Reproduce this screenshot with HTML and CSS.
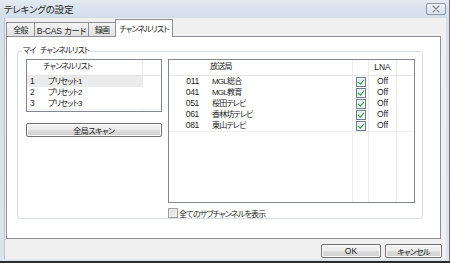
FILE: index.html
```html
<!DOCTYPE html>
<html lang="ja">
<head>
<meta charset="utf-8">
<title>テレキングの設定</title>
<link rel="stylesheet" href="styles.css">
</head>
<body>
<div class="window">
  <div class="titlebar">
    <span class="title">テレキングの設定</span>
    <span class="close">
      <svg width="18" height="10" viewBox="0 0 18 10"><path d="M6 2 L12 8 M12 2 L6 8" stroke="#fff" stroke-width="3" stroke-linecap="round"/><path d="M6 2 L12 8 M12 2 L6 8" stroke="#6f7b8a" stroke-width="1.3" stroke-linecap="round"/></svg>
    </span>
  </div>
  <div class="client">
    <div class="tabs">
      <div class="tab t1">全般</div>
      <div class="tab t2">B-CAS カード</div>
      <div class="tab t3">録画</div>
      <div class="tab active">チャンネルリスト</div>
    </div>
    <div class="panel">
      <fieldset class="group">
        <legend>マイ チャンネルリスト</legend>
        <div class="group-body">
          <div class="left">
            <div class="list llist">
              <div class="lrow head"><span></span><span class="hname">チャンネルリスト</span><span></span></div>
              <div class="lrow sel"><span class="idx">1</span><span class="nm">プリセット1</span><span></span></div>
              <div class="lrow"><span class="idx">2</span><span class="nm">プリセット2</span><span></span></div>
              <div class="lrow"><span class="idx">3</span><span class="nm">プリセット3</span><span></span></div>
              <div class="lrow fill"><span></span><span></span><span></span></div>
            </div>
            <div class="btn scan">全局スキャン</div>
          </div>
          <div class="right">
            <div class="list rlist">
              <div class="rrow head"><span></span><span class="hname">放送局</span><span></span><span class="lna">LNA</span><span></span></div>
              <div class="rrow"><span class="num">011</span><span class="nm">MGL総合</span><span class="chk"><i class="cb on"></i></span><span class="lna">Off</span><span></span></div>
              <div class="rrow"><span class="num">041</span><span class="nm">MGL教育</span><span class="chk"><i class="cb on"></i></span><span class="lna">Off</span><span></span></div>
              <div class="rrow"><span class="num">051</span><span class="nm">桜田テレビ</span><span class="chk"><i class="cb on"></i></span><span class="lna">Off</span><span></span></div>
              <div class="rrow"><span class="num">061</span><span class="nm">香林坊テレビ</span><span class="chk"><i class="cb on"></i></span><span class="lna">Off</span><span></span></div>
              <div class="rrow"><span class="num">081</span><span class="nm">東山テレビ</span><span class="chk"><i class="cb on"></i></span><span class="lna">Off</span><span></span></div>
              <div class="rrow fill"><span></span><span></span><span></span><span></span><span></span></div>
            </div>
            <label class="sub"><i class="cb off"></i><span>全てのサブチャンネルを表示</span></label>
          </div>
        </div>
      </fieldset>
    </div>
    <div class="actions">
      <div class="btn ok">OK</div>
      <div class="btn cancel">キャンセル</div>
    </div>
  </div>
</div>
</body>
</html>
```
FILE: styles.css
```css
* { box-sizing: border-box; }
html, body { margin: 0; padding: 0; }
body {
  width: 450px; height: 263px; overflow: hidden;
  font-family: "Liberation Sans", "Noto Sans CJK JP", sans-serif;
  font-size: 8px;
  font-feature-settings: "palt";
  letter-spacing: -0.8px;
  color: #222;
  background: #2b2b2b;
}
.window {
  width: 450px; height: 261px;
  display: flex; flex-direction: column;
  background: linear-gradient(to bottom, #dbe5ef 0, #d5e0eb 17px, #d9e4ef 100%);
  border-right: 1px solid #6c7580;
}
.titlebar {
  height: 18px; flex: none;
  display: flex; align-items: center; justify-content: space-between;
  padding: 0 3px 1px 4px;
  background: linear-gradient(to bottom, #e2eaf3, #d1dde9);
}
.title { font-size: 9.5px; color: #1e1e1e; letter-spacing: -0.2px; }
.close {
  width: 20px; height: 12px; margin-top: 1px;
  display: flex; align-items: center; justify-content: center;
  border: 1px solid #8a97a8; border-radius: 2px;
  background: linear-gradient(to bottom, #eef3f8, #d6dfea);
}
.client {
  flex: 1;
  margin: 0 3px 2px 4px;
  background: #f0f0f0;
  border-left: 1px solid #b5c2d0;
  padding: 1px 5px 0 1px;
  display: flex; flex-direction: column;
}
.tabs { display: flex; align-items: flex-end; height: 17px; position: relative; z-index: 1; }
.tab {
  height: 14px;
  border: 1px solid #8d9099; border-bottom: none; margin-right: -1px;
  background: linear-gradient(to bottom, #f4f4f4, #e1e1e1);
  display: flex; align-items: center; justify-content: center;
}
.tab.t1 { width: 29px; }
.tab.t2 { width: 55px; letter-spacing: -0.2px; font-size: 8.5px; }
.tab.t3 { width: 28px; }
.tab.active {
  width: 58px; height: 18px; margin-bottom: -1px;
  background: #fff;
}
.panel {
  height: 203px; flex: none;
  background: #fff;
  border: 1px solid #8d9099;
  padding: 9px 17px 19px 10px;
}
.group {
  margin: 0; height: 100%;
  border: 1px solid #d5dfe5; border-radius: 3px;
  padding: 0 7px 0 8px;
}
.group legend { padding: 0 1px; margin-left: -4px; line-height: 10px; word-spacing: 3px; }
.group-body { display: flex; gap: 6px; padding-top: 3px; }
.left { width: 136px; display: flex; flex-direction: column; }
.list { border: 1px solid #828790; background: #fff; }
.llist { height: 53px; overflow: hidden; }
.lrow { display: grid; grid-template-columns: 13px 103px 18px; height: 11px; line-height: 11px; }
.lrow.head { height: 16px; line-height: 14px; border-bottom: 1px solid #e5e5e5; }
.lrow.head span:nth-child(2) { border-right: 1px solid #e5e5e5; }
.lrow .hname { padding-left: 3px; }
.lrow .idx { padding-left: 3px; letter-spacing: 0; font-size: 8.5px; }
.lrow .nm { padding-left: 8px; }
.lrow.sel .idx, .lrow.sel .nm { background: #ebebeb; }
.lrow.fill { border-top: 1px solid #eeeeee; }
.lrow.fill span:nth-child(2) { border-right: 1px solid #eeeeee; }
.btn {
  height: 14px;
  border: 1px solid #707070; border-radius: 2px;
  background: linear-gradient(to bottom, #f3f3f3 0, #ebebeb 50%, #dddddd 51%, #cfcfcf 100%);
  box-shadow: inset 0 0 0 1px #fcfcfc;
  display: flex; align-items: center; justify-content: center;
}
.scan { margin-top: 11px; letter-spacing: -0.5px; }
.right { width: 247px; display: flex; flex-direction: column; }
.rlist { height: 144px; overflow: hidden; }
.rrow { display: grid; grid-template-columns: 38px 146px 16px 28px 17px; height: 11px; line-height: 11px; }
.rrow.head { height: 16px; line-height: 14px; border-bottom: 1px solid #e5e5e5; }
.rrow span { border-right: 1px solid transparent; }
.rrow span:nth-child(2), .rrow span:nth-child(3), .rrow span:nth-child(4) { border-right-color: #ececec; }
.rrow .num { text-align: right; padding-right: 7px; letter-spacing: -0.3px; font-size: 8.5px; }
.rrow .nm { padding-left: 5px; }
.rrow .hname { padding-left: 3px; }
.rrow .lna { text-align: center; letter-spacing: 0; font-size: 8.5px; }
.rrow .chk { display: flex; align-items: center; justify-content: center; }
.rrow.fill { height: 100px; border-top: 1px solid #eeeeee; }
.cb {
  display: block; width: 10px; height: 10px; flex: none;
  border: 1px solid #6a7d93;
  background: linear-gradient(to bottom right, #dfe8f1, #f7f9fb);
  box-shadow: inset 0 0 0 1px #f4f6f9;
  position: relative;
}
.cb.on::after {
  content: ""; position: absolute; left: 2.5px; top: 0.5px;
  width: 2.5px; height: 5px;
  border-right: 1.6px solid #2b9a2b; border-bottom: 1.6px solid #2b9a2b;
  transform: rotate(40deg);
}
.cb.off { border-color: #a0a0a0; background: linear-gradient(to bottom right, #d8d8d8, #f4f4f4); box-shadow: inset 0 0 0 1px #ececec; }
.sub { display: flex; align-items: center; gap: 1px; margin-top: 5px; height: 10px; }
.actions { display: flex; justify-content: flex-end; gap: 4px; padding-top: 5px; margin-right: -1px; }
.btn.ok { width: 60px; letter-spacing: 0; font-size: 8.5px; }
.btn.cancel { width: 57px; }
```
